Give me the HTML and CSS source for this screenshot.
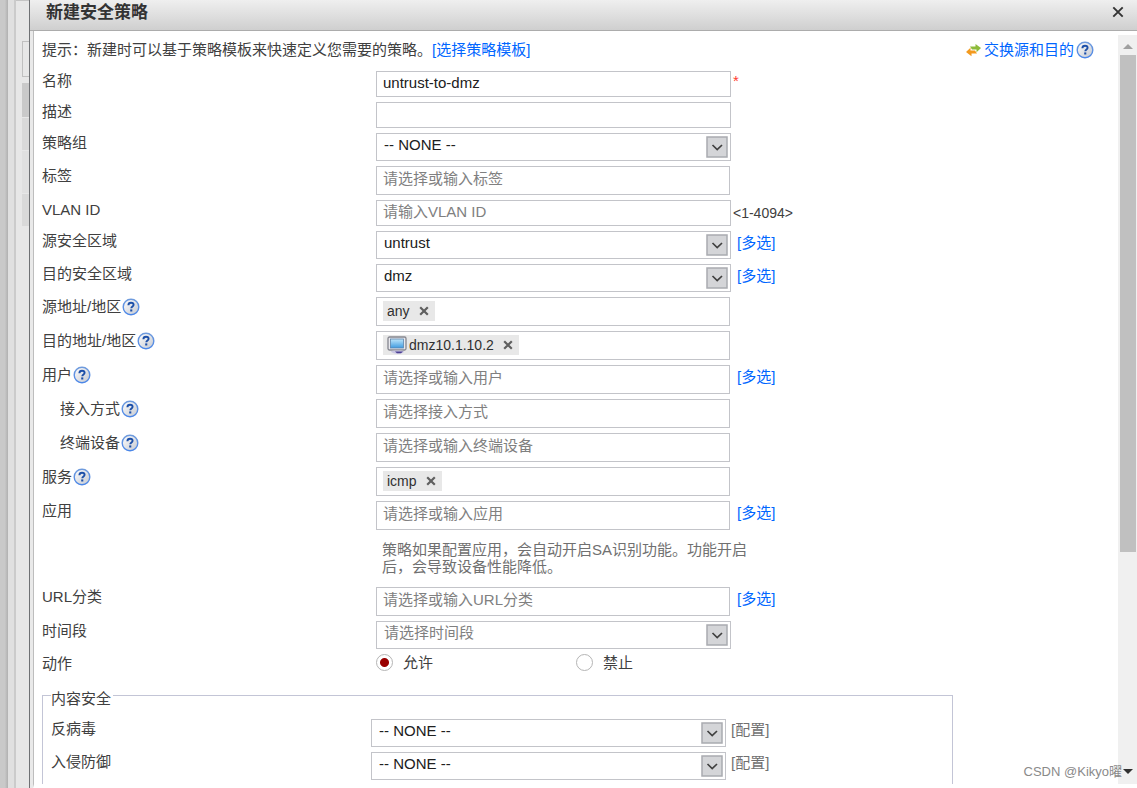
FILE: index.html
```html
<!DOCTYPE html>
<html lang="zh-CN">
<head>
<meta charset="utf-8">
<title>新建安全策略</title>
<link rel="stylesheet" href="styles.css">
</head>
<body>
<svg class="defs" aria-hidden="true">
  <defs>
    <linearGradient id="g-help" x1="0" y1="0" x2="1" y2="1"><stop offset="0" stop-color="#fff"/><stop offset="1" stop-color="#c4c8d0"/></linearGradient>
    <linearGradient id="g-ring" x1="0" y1="0" x2="0" y2="1"><stop offset="0" stop-color="#6f9bdd"/><stop offset="1" stop-color="#4a86e8"/></linearGradient>
    <linearGradient id="g-screen" x1="0" y1="0" x2="0" y2="1"><stop offset="0" stop-color="#bfe6fa"/><stop offset="1" stop-color="#3f9be0"/></linearGradient>
    <symbol id="help" viewBox="0 0 18 18">
      <circle cx="9" cy="9" r="7.8" fill="url(#g-help)" stroke="url(#g-ring)" stroke-width="1.4"/>
      <path d="M6.4 7.2C6.4 5.4 7.4 4.7 9 4.7s2.6.8 2.6 2.1c0 1.6-2.3 1.7-2.3 3.5" fill="none" stroke="#1c4fa8" stroke-width="1.9"/>
      <rect x="8.2" y="11.4" width="2.1" height="2.1" fill="#1c4fa8"/>
    </symbol>
    <symbol id="drop" viewBox="0 0 22 22">
      <rect x="1" y="1" width="20" height="20" fill="#d4d5d8" stroke="#a9abb0" stroke-width="1.5"/>
      <path d="M6.5 9l4.7 4.5L16 9" fill="none" stroke="#404040" stroke-width="1.7"/>
    </symbol>
    <symbol id="cross" viewBox="0 0 10 10"><path d="M1.2 1.2l7.6 7.6M8.8 1.2L1.2 8.8" fill="none" stroke="#606060" stroke-width="2.2"/></symbol>
  </defs>
</svg>
<div class="page">
  <div class="backdrop">
    <div class="edge"></div>
    <div class="rail"></div>
    <div class="under">
      <div class="under-box"></div>
      <div class="under-head"></div>
      <div class="under-row"></div>
      <div class="under-row under-tall"></div>
      <div class="under-row"></div>
    </div>
  </div>
  <main class="dialog">
    <header class="titlebar">
      <h1 class="title">新建安全策略</h1>
      <button class="close" type="button" aria-label="关闭"><svg viewBox="0 0 12 12" width="12" height="12"><path d="M1.3 1.3l9.4 9.4M10.7 1.3l-9.4 9.4" fill="none" stroke="#333" stroke-width="1.9"/></svg></button>
    </header>
    <div class="body">
      <form class="content">
        <div class="tip">
          <p class="tip-text">提示：新建时可以基于策略模板来快速定义您需要的策略。<a class="link" href="#">[选择策略模板]</a></p>
          <a class="link swap" href="#"><svg viewBox="0 0 17 14" width="17" height="14"><path d="M5 3.5h5.500V1L16 5l-4.500 4.200V6.500H7z" fill="#8dbb3a"/><path d="M12 10.500H6.500V13.200L1 9l4.500-4.200V7.500H10z" fill="#f39a1e"/></svg>交换源和目的<svg class="help"><use href="#help"/></svg></a>
        </div>

        <div class="row"><label class="label" for="name">名称</label><input class="text" id="name" value="untrust-to-dmz"><span class="star">*</span></div>
        <div class="row"><label class="label" for="desc">描述</label><input class="text" id="desc"></div>
        <div class="row"><label class="label" for="group">策略组</label><span class="pick"><select class="select" id="group"><option>-- NONE --</option></select><svg class="drop"><use href="#drop"/></svg></span></div>
        <div class="row"><label class="label" for="tag">标签</label><span class="tags"><input class="tag-input" id="tag" placeholder="请选择或输入标签"></span></div>
        <div class="row"><label class="label" for="vlan">VLAN ID</label><input class="text" id="vlan" placeholder="请输入VLAN ID"><span class="range">&lt;1-4094&gt;</span></div>
        <div class="row"><label class="label" for="src-zone">源安全区域</label><span class="pick"><select class="select" id="src-zone"><option>untrust</option></select><svg class="drop"><use href="#drop"/></svg></span><a class="link side" href="#">[多选]</a></div>
        <div class="row"><label class="label" for="dst-zone">目的安全区域</label><span class="pick"><select class="select" id="dst-zone"><option>dmz</option></select><svg class="drop"><use href="#drop"/></svg></span><a class="link side" href="#">[多选]</a></div>
        <div class="row"><label class="label" for="src-addr">源地址/地区<svg class="help"><use href="#help"/></svg></label><span class="tags"><span class="chip">any<button class="chip-x" type="button" aria-label="删除 any"><svg width="10" height="10"><use href="#cross"/></svg></button></span><input class="tag-input" id="src-addr"></span></div>
        <div class="row"><label class="label" for="dst-addr">目的地址/地区<svg class="help"><use href="#help"/></svg></label><span class="tags"><span class="chip"><svg class="pc" viewBox="0 0 20 18"><rect x="1" y="1" width="18" height="13" rx="1.500" fill="#e9e9ee" stroke="#85868f" stroke-width="1.300"/><rect x="3.500" y="3" width="13" height="9" fill="url(#g-screen)" stroke="#5d86ad" stroke-width=".8"/><path d="M4 15.500c0-.8 2-1 6-1s7 .2 7 1-2 2.200-6 2.200-7-1.400-7-2.200z" fill="#c9c6e2"/><path d="M8 15.400h8l-2 1.800h-4z" fill="#4b3f93"/></svg>dmz10.1.10.2<button class="chip-x" type="button" aria-label="删除 dmz10.1.10.2"><svg width="10" height="10"><use href="#cross"/></svg></button></span><input class="tag-input" id="dst-addr"></span></div>
        <div class="row"><label class="label" for="user">用户<svg class="help"><use href="#help"/></svg></label><span class="tags"><input class="tag-input" id="user" placeholder="请选择或输入用户"></span><a class="link side" href="#">[多选]</a></div>
        <div class="row"><label class="label indent" for="access">接入方式<svg class="help"><use href="#help"/></svg></label><span class="tags"><input class="tag-input" id="access" placeholder="请选择接入方式"></span></div>
        <div class="row"><label class="label indent" for="device">终端设备<svg class="help"><use href="#help"/></svg></label><span class="tags"><input class="tag-input" id="device" placeholder="请选择或输入终端设备"></span></div>
        <div class="row"><label class="label" for="service">服务<svg class="help"><use href="#help"/></svg></label><span class="tags"><span class="chip">icmp<button class="chip-x" type="button" aria-label="删除 icmp"><svg width="10" height="10"><use href="#cross"/></svg></button></span><input class="tag-input" id="service"></span></div>
        <div class="row"><label class="label" for="app">应用</label><span class="tags"><input class="tag-input" id="app" placeholder="请选择或输入应用"></span><a class="link side" href="#">[多选]</a></div>
        <div class="row"><p class="note">策略如果配置应用，会自动开启SA识别功能。功能开启后，会导致设备性能降低。</p></div>
        <div class="row"><label class="label" for="url">URL分类</label><span class="tags"><input class="tag-input" id="url" placeholder="请选择或输入URL分类"></span><a class="link side" href="#">[多选]</a></div>
        <div class="row"><label class="label" for="time">时间段</label><span class="pick"><select class="select empty" id="time"><option>请选择时间段</option></select><svg class="drop"><use href="#drop"/></svg></span></div>
        <div class="row" role="radiogroup" aria-labelledby="action"><span class="label" id="action">动作</span><span class="radios"><label class="choice"><input class="radio" type="radio" name="action" checked>允许</label><label class="choice"><input class="radio" type="radio" name="action">禁止</label></span></div>

        <fieldset class="group">
          <legend class="legend">内容安全</legend>
          <div class="row"><label class="label" for="av">反病毒</label><span class="pick"><select class="select" id="av"><option>-- NONE --</option></select><svg class="drop"><use href="#drop"/></svg></span><a class="config" href="#">[配置]</a></div>
          <div class="row"><label class="label" for="ips">入侵防御</label><span class="pick"><select class="select" id="ips"><option>-- NONE --</option></select><svg class="drop"><use href="#drop"/></svg></span><a class="config" href="#">[配置]</a></div>
        </fieldset>
      </form>
      <div class="scrollbar" aria-hidden="true">
        <svg class="arrow" viewBox="0 0 10 6"><path d="M0 6l5-5 5 5z" fill="#a0a0a0"/></svg>
        <div class="track"><div class="thumb"></div></div>
        <svg class="arrow" viewBox="0 0 10 6"><path d="M0 0l5 5 5-5z" fill="#303030"/></svg>
      </div>
      <span class="watermark">CSDN @Kikyo曜</span>
    </div>
  </main>
</div>
</body>
</html>
```

FILE: styles.css
```css
* { box-sizing: border-box; }

body {
  margin: 0;
  background: #fff;
  color: #404040;
  font: 15px/20px "Liberation Sans", "Noto Sans CJK SC", sans-serif;
}

input, select, button { font: inherit; color: inherit; }
.defs { position: absolute; width: 0; height: 0; }
.link { color: #0066ff; text-decoration: none; }

.page { display: flex; height: 100vh; overflow: hidden; }

/* Dimmed page behind the dialog */
.backdrop { display: flex; flex: 0 0 29px; background: #e7e7e7; }
.edge { width: 8px; background: linear-gradient(90deg, #c9c9c9 60%, #b0b0b0); }
.rail { width: 8px; background: #e0e0e0; border-right: 2px solid #cbcbcb; }
.under { flex: 1; padding: 40px 0 0 6px; border-top: 1px solid #c4c4c4; }
.under-box { height: 36px; margin-bottom: 6px; border: 1px solid #c0c0c0; border-right: 0; }
.under-head { height: 34px; background: #c9c9c9; }
.under-row { height: 32px; margin-top: 1px; background: #d9d9d9; }
.under-tall { height: 42px; background: #e0e0e0; }

/* Dialog */
.dialog {
  display: flex;
  flex: 1;
  flex-direction: column;
  min-width: 0;
  border-left: 1px solid #6f7174;
  background: #e9e9e9;
}
.titlebar {
  display: flex;
  justify-content: space-between;
  padding: 0 13px 4px 16px;
  border-bottom: 1px solid #acacac;
  background: linear-gradient(#efefef, #cfcfcf);
}
.title { margin: 0; color: #333; font-size: 17px; line-height: 26px; }
.close { display: flex; align-items: center; padding: 0 0 2px; border: 0; background: none; }
.body {
  position: relative;
  display: flex;
  flex: 1;
  min-height: 0;
  margin-left: 3px;
  border-left: 1px solid #bdbdbd;
  border-bottom: 4px solid #fff;
  background: #fff;
}
.content {
  display: flex;
  flex: 1;
  flex-direction: column;
  gap: 5px;
  min-width: 0;
  padding: 9px 4px 0 8px;
  overflow: hidden;
}
.content > * { flex-shrink: 0; }

.tip { display: flex; justify-content: space-between; height: 26px; padding-right: 20px; }
.tip-text { margin: 0; }
.swap { display: flex; align-items: center; gap: 2px; height: 20px; }
.swap .help { margin: 0; }

/* Form rows */
.row {
  display: grid;
  grid-template-columns: 334px minmax(0, 355px) 1fr;
  align-items: start;
}
.label { display: flex; align-items: center; height: 20px; }
.indent { padding-left: 18px; }
.help { width: 18px; height: 18px; margin-left: 1px; }

.text, .tags, .select { border: 1px solid #c3c4c9; border-radius: 0; background: #fff; }
.text, .select { width: 100%; color: #202020; outline: 0; }
.text { height: 26px; padding: 0 6px 3px; }
.tags { display: flex; height: 29px; margin-right: 1px; padding: 3px 6px 5px; }
.tag-input { flex: 1; min-width: 0; height: 18px; padding: 0; border: 0; outline: 0; background: none; }
::placeholder { color: #808080; opacity: 1; }

.pick { position: relative; display: block; }
.select { display: block; height: 28px; padding: 0 28px 4px 7px; appearance: none; }
.empty { color: #808080; }
.drop { position: absolute; top: 3px; right: 3px; width: 22px; height: 22px; pointer-events: none; }

.chip { display: flex; align-items: center; height: 20px; padding: 0 6px 0 4px; background: #e8e8e8; color: #303030; font-size: 14px; }
.chip-x { display: flex; margin-left: 9px; padding: 0; border: 0; background: none; }
.pc { width: 20px; height: 18px; margin-right: 2px; }

.side { padding: 2px 0 0 6px; }
.range { padding: 3px 0 0 2px; font-size: 14px; }
.star { padding-left: 2px; color: #ff3b30; }
.note { grid-column: 2; margin: 0 -20px 0 6px; padding: 6px 0 7px; color: #707070; line-height: 17px; }

.radios { display: flex; }
.choice { display: flex; flex: 0 0 200px; align-items: center; gap: 10px; height: 17px; }
.radio {
  width: 17px;
  height: 17px;
  margin: 0;
  border: 1px solid #b5b5b5;
  border-radius: 50%;
  appearance: none;
}
.radio:checked { background: radial-gradient(circle, #990000 4px, #fff 5px); }

/* Content security */
.group {
  display: flex;
  flex-direction: column;
  width: 85%;
  height: 300px;
  min-width: 0;
  margin: 2px 0 0;
  padding: 10px 8px 0;
  border: 1px solid #c3c5d6;
}
.group .row { grid-template-columns: 320px minmax(0, 355px) 1fr; margin-bottom: 5px; }
.legend { padding: 8px 2px 0 0; }
.config { padding: 1px 0 0 5px; color: #707070; text-decoration: none; }

/* Scrollbar */
.scrollbar { display: flex; flex: 0 0 19px; flex-direction: column; align-items: center; padding: 8px 0 9px; background: #f0f0f0; border-top: 4px solid #fff; }
.arrow { width: 10px; height: 6px; }
.track { display: flex; flex: 1; flex-direction: column; width: 16px; padding: 6px 0 4px; }
.thumb { flex: 0 0 70%; background: #c0c0c0; }

.watermark { position: absolute; right: 15px; bottom: 2px; color: #8a8a8a; font-size: 13px; }
```
